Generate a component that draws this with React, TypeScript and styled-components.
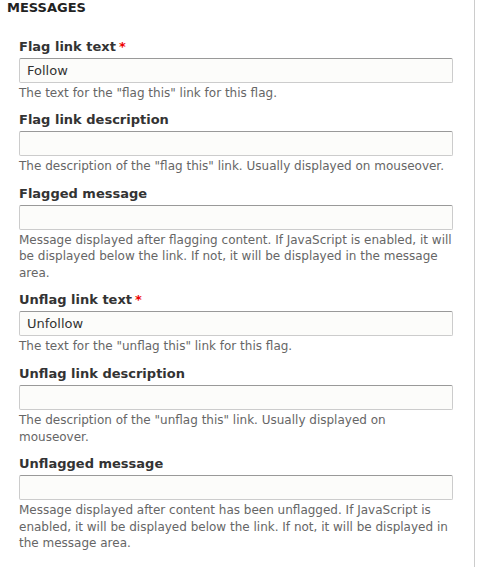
import React from "react";
import styled, { createGlobalStyle } from "styled-components";

const GlobalStyle = createGlobalStyle`
    html, body {
        margin: 0;
        padding: 0;
        background: #fff;
    }
    body {
        font-family: "DejaVu Sans", "Liberation Sans", sans-serif;
        color: #333;
    }
`;

interface Field {
    label: string;
    value?: string;
    required?: boolean;
    description: string;
}

const fields: Field[] = [
    {
        label: "Flag link text",
        value: "Follow",
        required: true,
        description: 'The text for the "flag this" link for this flag.',
    },
    {
        label: "Flag link description",
        description:
            'The description of the "flag this" link. Usually displayed on mouseover.',
    },
    {
        label: "Flagged message",
        description:
            "Message displayed after flagging content. If JavaScript is enabled, it will be displayed below the link. If not, it will be displayed in the message area.",
    },
    {
        label: "Unflag link text",
        value: "Unfollow",
        required: true,
        description: 'The text for the "unflag this" link for this flag.',
    },
    {
        label: "Unflag link description",
        description:
            'The description of the "unflag this" link. Usually displayed on mouseover.',
    },
    {
        label: "Unflagged message",
        description:
            "Message displayed after content has been unflagged. If JavaScript is enabled, it will be displayed below the link. If not, it will be displayed in the message area.",
    },
];

const Fieldset = styled.section`
    width: 475px;
    min-height: 567px;
    box-sizing: border-box;
    border-right: 1px solid #cccccc;
    padding: 0 0 0 7px;
`;

const Legend = styled.h2`
    margin: 0;
    font-size: 13px;
    line-height: 16px;
    font-weight: bold;
    text-transform: uppercase;
    color: #222;
`;

const FieldList = styled.div`
    display: flex;
    flex-direction: column;
    gap: 10.5px;
    padding: 23px 0 0 12px;
`;

const FormItem = styled.div`
    display: flex;
    flex-direction: column;
    width: 434px;
`;

const Label = styled.label`
    font-size: 13px;
    line-height: 16px;
    font-weight: bold;
    color: #333;
`;

const Required = styled.span`
    color: #e00;
    margin-left: 3px;
`;

const TextInput = styled.input`
    box-sizing: border-box;
    width: 434px;
    height: 25px;
    margin: 3px 0 0;
    padding: 0 7px;
    border: 1px solid #cccccc;
    border-top-color: #999999;
    border-radius: 2px;
    background: #fcfcfa;
    font-family: "DejaVu Sans", "Liberation Sans", sans-serif;
    font-size: 13px;
    color: #333;
    outline: none;
`;

const Description = styled.div`
    margin-top: 2px;
    font-size: 12px;
    line-height: 16.8px;
    color: #666;
`;

const App: React.FC = () => {
    return (
        <>
            <GlobalStyle />
            <Fieldset>
                <Legend>Messages</Legend>
                <FieldList>
                    {fields.map((field) => (
                        <FormItem key={field.label}>
                            <Label>
                                {field.label}
                                {field.required && <Required>*</Required>}
                            </Label>
                            <TextInput type="text" defaultValue={field.value ?? ""} />
                            <Description>{field.description}</Description>
                        </FormItem>
                    ))}
                </FieldList>
            </Fieldset>
        </>
    );
};

export default App;
